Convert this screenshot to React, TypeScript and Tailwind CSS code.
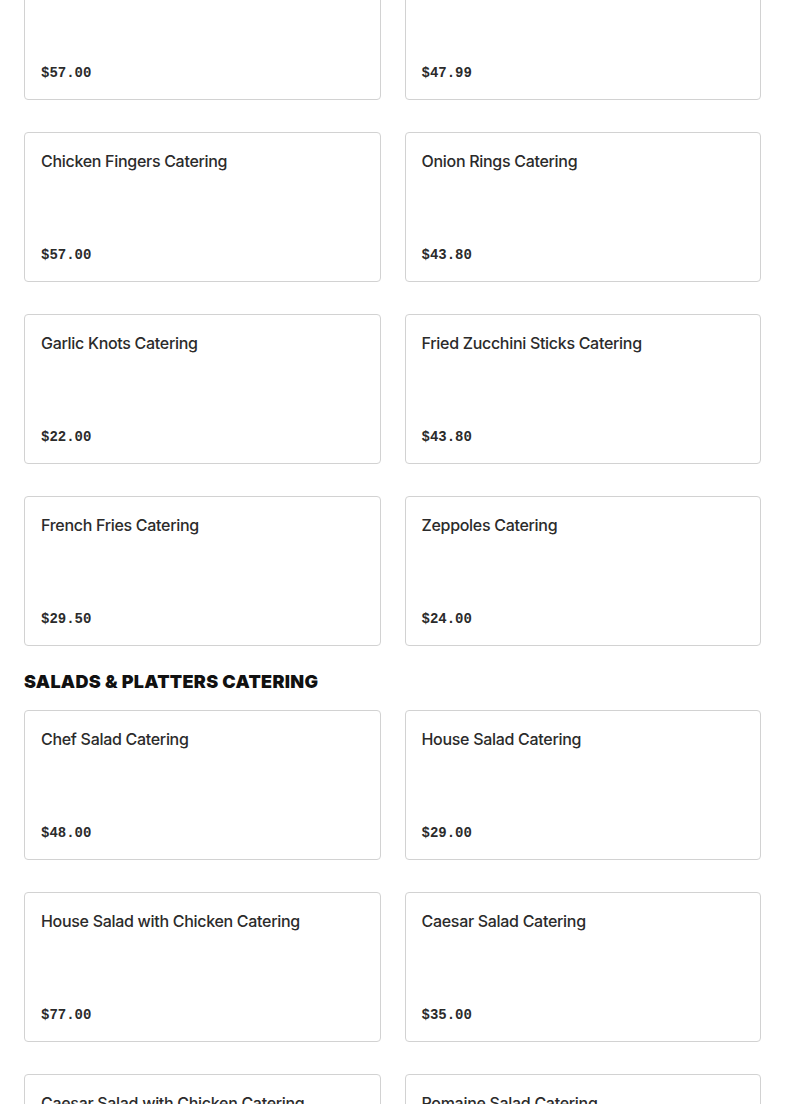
const sections = [
  {
    title: null as string | null,
    items: [
      { name: "Buffalo Wings Catering", price: "$57.00" },
      { name: "Mozzarella Sticks Catering", price: "$47.99" },
      { name: "Chicken Fingers Catering", price: "$57.00" },
      { name: "Onion Rings Catering", price: "$43.80" },
      { name: "Garlic Knots Catering", price: "$22.00" },
      { name: "Fried Zucchini Sticks Catering", price: "$43.80" },
      { name: "French Fries Catering", price: "$29.50" },
      { name: "Zeppoles Catering", price: "$24.00" },
    ],
  },
  {
    title: "Salads & Platters Catering",
    items: [
      { name: "Chef Salad Catering", price: "$48.00" },
      { name: "House Salad Catering", price: "$29.00" },
      { name: "House Salad with Chicken Catering", price: "$77.00" },
      { name: "Caesar Salad Catering", price: "$35.00" },
      { name: "Caesar Salad with Chicken Catering", price: "$85.00" },
      { name: "Romaine Salad Catering", price: "$29.00" },
    ],
  },
]

function MenuCard({ name, price }: { name: string; price: string }) {
  return (
    <div className="h-[150px] rounded border border-[#d2d2d2] bg-white p-4 flex flex-col justify-between">
      <h3 className="font-['Inter',sans-serif] text-base leading-6 font-medium text-[#2b2b2b] tracking-[-0.3px]">
        {name}
      </h3>
      <span className="font-['Liberation_Mono',monospace] text-sm leading-5 font-bold text-[#2b2b2b]">
        {price}
      </span>
    </div>
  )
}

export default function App() {
  return (
    <div className="min-h-screen bg-white overflow-hidden">
      <div className="px-6 -mt-[50px]">
        {sections.map((section, i) => (
          <section key={i}>
            {section.title && (
              <h2 className="mt-6 mb-4 font-['Inter',sans-serif] text-lg leading-6 font-black uppercase text-[#111] tracking-[0.3px]">
                {section.title}
              </h2>
            )}
            <div className="grid grid-cols-2 gap-x-6 gap-y-8">
              {section.items.map((item) => (
                <MenuCard key={item.name} name={item.name} price={item.price} />
              ))}
            </div>
          </section>
        ))}
      </div>
    </div>
  )
}
